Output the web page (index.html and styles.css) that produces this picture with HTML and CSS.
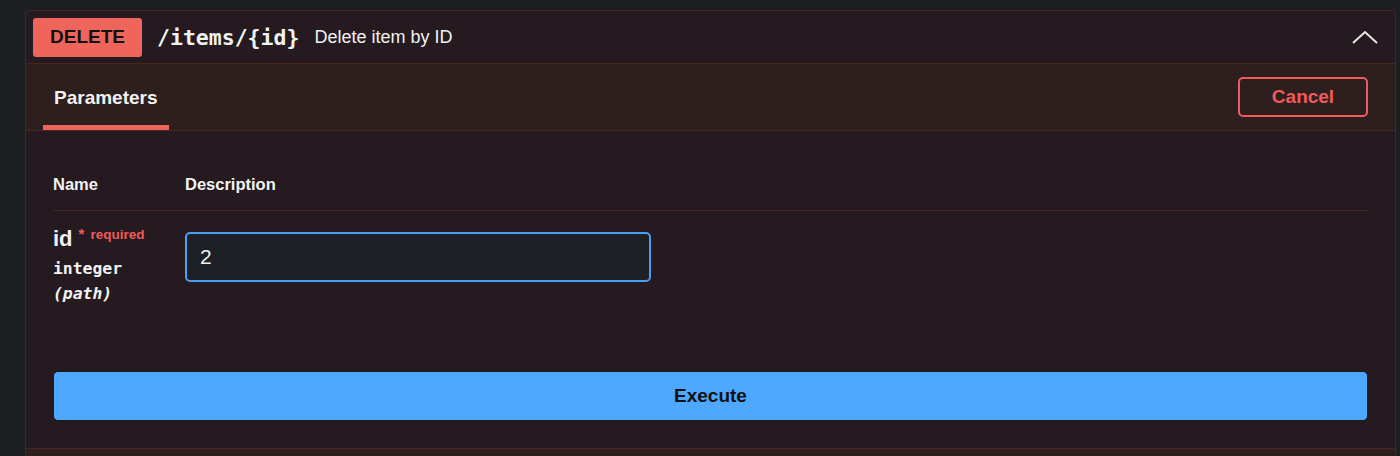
FILE: index.html
```html
<!DOCTYPE html>
<html>
<head>
<meta charset="utf-8">
<link rel="stylesheet" href="styles.css">
</head>
<body>
<div class="card">
  <div class="op-header">
    <span class="method">DELETE</span>
    <span class="path">/items/{id}</span>
    <span class="summary">Delete item by ID</span>
    <svg class="chevron" width="26" height="14" viewBox="0 0 26 14"><path d="M1 13 L13 2 L25 13" fill="none" stroke="#e8e8e8" stroke-width="2"/></svg>
  </div>
  <div class="tabs">
    <div class="tab">Parameters</div>
    <button class="cancel">Cancel</button>
  </div>
  <div class="body">
    <div class="thead">
      <div class="col-name">Name</div>
      <div class="col-desc">Description</div>
    </div>
    <div class="row">
      <div class="col-name">
        <div class="pname">id<span class="req"><span class="star">*</span>required</span></div>
        <div class="ptype">integer</div>
        <div class="pin">(path)</div>
      </div>
      <div class="col-desc">
        <div class="input">2</div>
      </div>
    </div>
    <button class="execute">Execute</button>
  </div>
  <div class="responses"></div>
</div>
</body>
</html>
```

FILE: styles.css
```css
html, body {
  margin: 0;
  padding: 0;
  background: #1c2022;
  height: 456px;
  overflow: hidden;
  font-family: "Liberation Sans", Arial, sans-serif;
}
.card {
  margin: 10px 4px 0 25px;
  border: 1px solid #4a2422;
  border-radius: 4px;
  background: #241a1f;
}
.op-header {
  display: flex;
  align-items: center;
  height: 52px;
  padding: 0 17px 0 7px;
  border-bottom: 1px solid #4a2422;
}
.method {
  width: 109px;
  height: 39px;
  display: flex;
  align-items: center;
  justify-content: center;
  background: #f0655b;
  border-radius: 3px;
  color: #111;
  font-weight: bold;
  font-size: 19px;
}
.path {
  margin-left: 15px;
  font-family: "DejaVu Sans Mono", monospace;
  font-weight: bold;
  font-size: 21.5px;
  color: #f2f2f2;
}
.summary {
  margin-left: 15px;
  font-size: 18px;
  color: #f2f2f2;
}
.chevron {
  margin-left: auto;
}
.tabs {
  display: flex;
  align-items: center;
  justify-content: space-between;
  padding: 0 27px 0 17px;
  background: #2e1f1f;
  border-bottom: 1px solid #4a2422;
  box-sizing: border-box;
  height: 67px;
}
.tab {
  align-self: flex-end;
  padding: 5px 11px 0;
  height: 65px;
  display: flex;
  align-items: center;
  box-sizing: border-box;
  border-bottom: 5px solid #f0655b;
  color: #f2f2f2;
  font-weight: bold;
  font-size: 19px;
}
.cancel {
  width: 130px;
  height: 40px;
  background: transparent;
  border: 2px solid #f05a5a;
  border-radius: 5px;
  color: #f05a5a;
  font-family: "Liberation Sans", Arial, sans-serif;
  font-weight: bold;
  font-size: 19px;
}
.body {
  padding: 0 27px 27px 27px;
}
.thead {
  display: flex;
  align-items: center;
  height: 80px;
  padding-top: 28px;
  box-sizing: border-box;
  border-bottom: 1px solid #4a2422;
  color: #f2f2f2;
  font-weight: bold;
  font-size: 16.5px;
}
.col-name {
  width: 132px;
  flex: none;
}
.col-desc {
  flex: 1;
}
.row {
  display: flex;
  padding-top: 14px;
  height: 160px;
  box-sizing: border-box;
}
.pname {
  color: #f2f2f2;
  font-weight: bold;
  font-size: 22px;
  line-height: 28px;
}
.req {
  position: relative;
  top: -7px;
  margin-left: 6px;
  color: #f05a5a;
  font-size: 13.5px;
  font-weight: bold;
}
.star {
  margin-right: 6px;
  font-size: 15px;
}
.ptype {
  margin-top: 3px;
  font-family: "DejaVu Sans Mono", monospace;
  font-weight: bold;
  font-size: 16.4px;
  color: #f2f2f2;
}
.pin {
  margin-top: 6px;
  font-family: "DejaVu Sans Mono", monospace;
  font-weight: bold;
  font-style: italic;
  font-size: 16.4px;
  color: #f2f2f2;
}
.input {
  margin-top: 7px;
  width: 466px;
  height: 50px;
  box-sizing: border-box;
  border: 2px solid #4a9ff0;
  border-radius: 5px;
  background: #1d2024;
  color: #f2f2f2;
  font-size: 21px;
  padding-left: 13px;
  display: flex;
  align-items: center;
}
.execute {
  display: block;
  width: 100%;
  height: 50px;
  border: 1px solid #1a1a1a;
  border-radius: 5px;
  background: #4fa8ff;
  color: #111;
  font-family: "Liberation Sans", Arial, sans-serif;
  font-weight: bold;
  font-size: 19px;
}
.responses {
  height: 40px;
  border-top: 1px solid #4a2422;
  background: #2e1f1f;
}
```
